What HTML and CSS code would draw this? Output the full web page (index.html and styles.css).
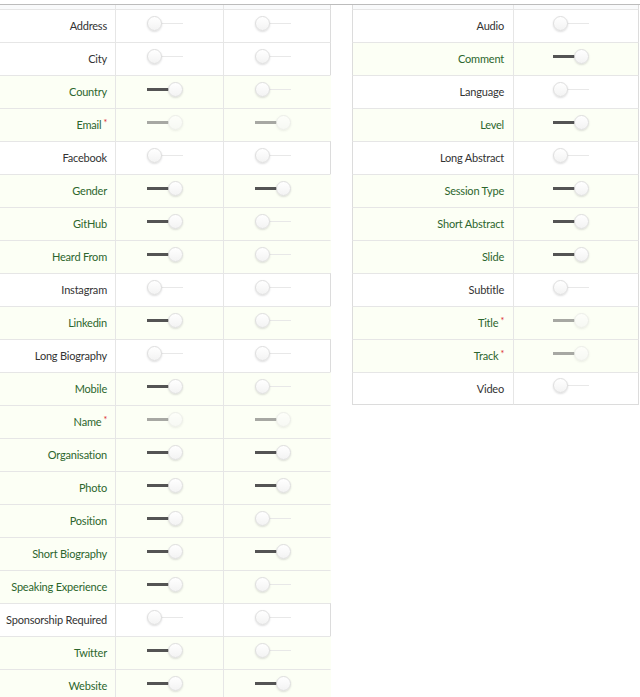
FILE: index.html
```html
<!DOCTYPE html>
<html lang="en">
<head>
<meta charset="UTF-8">
<meta name="viewport" content="width=device-width, initial-scale=1.0">
<title>Form Fields</title>
<link rel="stylesheet" href="styles.css">
</head>
<body>
    <div class="topbar"></div>

    <div class="panels">
        <!-- speaker fields -->
        <table class="fields speakers">
            <thead>
                <tr><th class="name"></th><th class="col"></th><th class="col last"></th></tr>
            </thead>
            <tbody>
                <tr><td class="name">Address</td><td class="col"><span class="toggle"></span></td><td class="col last"><span class="toggle"></span></td></tr>
                <tr><td class="name">City</td><td class="col"><span class="toggle"></span></td><td class="col last"><span class="toggle"></span></td></tr>
                <tr class="positive"><td class="name">Country</td><td class="col"><span class="toggle on"></span></td><td class="col last"><span class="toggle"></span></td></tr>
                <tr class="positive"><td class="name required">Email</td><td class="col"><span class="toggle on locked"></span></td><td class="col last"><span class="toggle on locked"></span></td></tr>
                <tr><td class="name">Facebook</td><td class="col"><span class="toggle"></span></td><td class="col last"><span class="toggle"></span></td></tr>
                <tr class="positive"><td class="name">Gender</td><td class="col"><span class="toggle on"></span></td><td class="col last"><span class="toggle on"></span></td></tr>
                <tr class="positive"><td class="name">GitHub</td><td class="col"><span class="toggle on"></span></td><td class="col last"><span class="toggle"></span></td></tr>
                <tr class="positive"><td class="name">Heard From</td><td class="col"><span class="toggle on"></span></td><td class="col last"><span class="toggle"></span></td></tr>
                <tr><td class="name">Instagram</td><td class="col"><span class="toggle"></span></td><td class="col last"><span class="toggle"></span></td></tr>
                <tr class="positive"><td class="name">Linkedin</td><td class="col"><span class="toggle on"></span></td><td class="col last"><span class="toggle"></span></td></tr>
                <tr><td class="name">Long Biography</td><td class="col"><span class="toggle"></span></td><td class="col last"><span class="toggle"></span></td></tr>
                <tr class="positive"><td class="name">Mobile</td><td class="col"><span class="toggle on"></span></td><td class="col last"><span class="toggle"></span></td></tr>
                <tr class="positive"><td class="name required">Name</td><td class="col"><span class="toggle on locked"></span></td><td class="col last"><span class="toggle on locked"></span></td></tr>
                <tr class="positive"><td class="name">Organisation</td><td class="col"><span class="toggle on"></span></td><td class="col last"><span class="toggle on"></span></td></tr>
                <tr class="positive"><td class="name">Photo</td><td class="col"><span class="toggle on"></span></td><td class="col last"><span class="toggle on"></span></td></tr>
                <tr class="positive"><td class="name">Position</td><td class="col"><span class="toggle on"></span></td><td class="col last"><span class="toggle"></span></td></tr>
                <tr class="positive"><td class="name">Short Biography</td><td class="col"><span class="toggle on"></span></td><td class="col last"><span class="toggle on"></span></td></tr>
                <tr class="positive"><td class="name">Speaking Experience</td><td class="col"><span class="toggle on"></span></td><td class="col last"><span class="toggle"></span></td></tr>
                <tr><td class="name">Sponsorship Required</td><td class="col"><span class="toggle"></span></td><td class="col last"><span class="toggle"></span></td></tr>
                <tr class="positive"><td class="name">Twitter</td><td class="col"><span class="toggle on"></span></td><td class="col last"><span class="toggle"></span></td></tr>
                <tr class="positive"><td class="name">Website</td><td class="col"><span class="toggle on"></span></td><td class="col last"><span class="toggle on"></span></td></tr>
            </tbody>
        </table>

        <!-- session fields -->
        <table class="fields sessions">
            <thead>
                <tr><th class="name"></th><th class="col last"></th></tr>
            </thead>
            <tbody>
                <tr><td class="name">Audio</td><td class="col last"><span class="toggle"></span></td></tr>
                <tr class="positive"><td class="name">Comment</td><td class="col last"><span class="toggle on"></span></td></tr>
                <tr><td class="name">Language</td><td class="col last"><span class="toggle"></span></td></tr>
                <tr class="positive"><td class="name">Level</td><td class="col last"><span class="toggle on"></span></td></tr>
                <tr><td class="name">Long Abstract</td><td class="col last"><span class="toggle"></span></td></tr>
                <tr class="positive"><td class="name">Session Type</td><td class="col last"><span class="toggle on"></span></td></tr>
                <tr class="positive"><td class="name">Short Abstract</td><td class="col last"><span class="toggle on"></span></td></tr>
                <tr class="positive"><td class="name">Slide</td><td class="col last"><span class="toggle on"></span></td></tr>
                <tr><td class="name">Subtitle</td><td class="col last"><span class="toggle"></span></td></tr>
                <tr class="positive"><td class="name required">Title</td><td class="col last"><span class="toggle on locked"></span></td></tr>
                <tr class="positive"><td class="name required">Track</td><td class="col last"><span class="toggle on locked"></span></td></tr>
                <tr><td class="name">Video</td><td class="col last"><span class="toggle"></span></td></tr>
            </tbody>
        </table>
    </div>
</body>
</html>
```

FILE: styles.css
```css
body {
    font-family: 'Lato', 'Liberation Sans', sans-serif;
    margin: 0;
    padding: 0;
    background: #fff;
    color: #333;
    overflow: hidden;
}

.topbar {
    height: 4px;
    border-bottom: 1px solid #bcbcbc;
}

.panels {
    display: flex;
    align-items: flex-start;
    gap: 21px;
}

.fields {
    border-collapse: separate;
    border-spacing: 0;
    table-layout: fixed;
    font-size: 11px;
    letter-spacing: -0.2px;
}

.fields th {
    height: 4px;
    padding: 0;
    background: #f9fafb;
}

.fields th,
.fields td {
    box-sizing: border-box;
}

.fields td {
    height: 33px;
    border-top: 1px solid #e6e6e6;
    vertical-align: middle;
}

.fields .name {
    text-align: right;
    white-space: nowrap;
    padding: 0 8px 1px 0;
}

.fields .col {
    border-left: 1px solid #e6e6e6;
}

.fields .last {
    border-right: 1px solid #dcdcdc;
}

.fields td.col {
    padding: 0 0 6px 31px;
    line-height: 0;
}

/* left table */
.speakers {
    width: 331px;
}

.speakers .name { width: 115px; }
.speakers .col { width: 108px; }

/* right table */
.sessions {
    width: 287px;
}

.sessions .name {
    width: 161px;
    padding-right: 9px;
    border-left: 1px solid #dcdcdc;
}

.sessions .col { width: 126px; }

.sessions td.col {
    padding-left: 39px;
}

.sessions tbody tr:last-child td {
    border-bottom: 1px solid #dcdcdc;
}

/* green rows */
.fields tr.positive td {
    background: #fcfff5;
    color: #2c662d;
}

.speakers tr.positive td.last {
    border-right-color: transparent;
}

.required::after {
    content: '*';
    color: #db2828;
    font-size: 9px;
    vertical-align: top;
    margin-left: 2px;
    position: relative;
    top: -1px;
}

/* slider toggles */
.toggle {
    display: inline-block;
    position: relative;
    width: 36px;
    height: 15px;
    vertical-align: middle;
}

.toggle::before {
    content: '';
    position: absolute;
    left: 0;
    right: 0;
    top: 7px;
    height: 1px;
    background: #e8e8e8;
}

.toggle::after {
    content: '';
    position: absolute;
    left: 0;
    top: 0;
    width: 13px;
    height: 13px;
    border-radius: 50%;
    border: 1px solid #dedede;
    background: linear-gradient(#fff, #f3f3f3);
    box-shadow: 0 1px 2px rgba(34, 36, 38, 0.15);
}

.toggle.on::before {
    top: 6px;
    height: 3px;
    right: 8px;
    background: #545454;
}

.toggle.on::after {
    left: 21px;
}

.toggle.locked {
    opacity: 0.5;
}
```
